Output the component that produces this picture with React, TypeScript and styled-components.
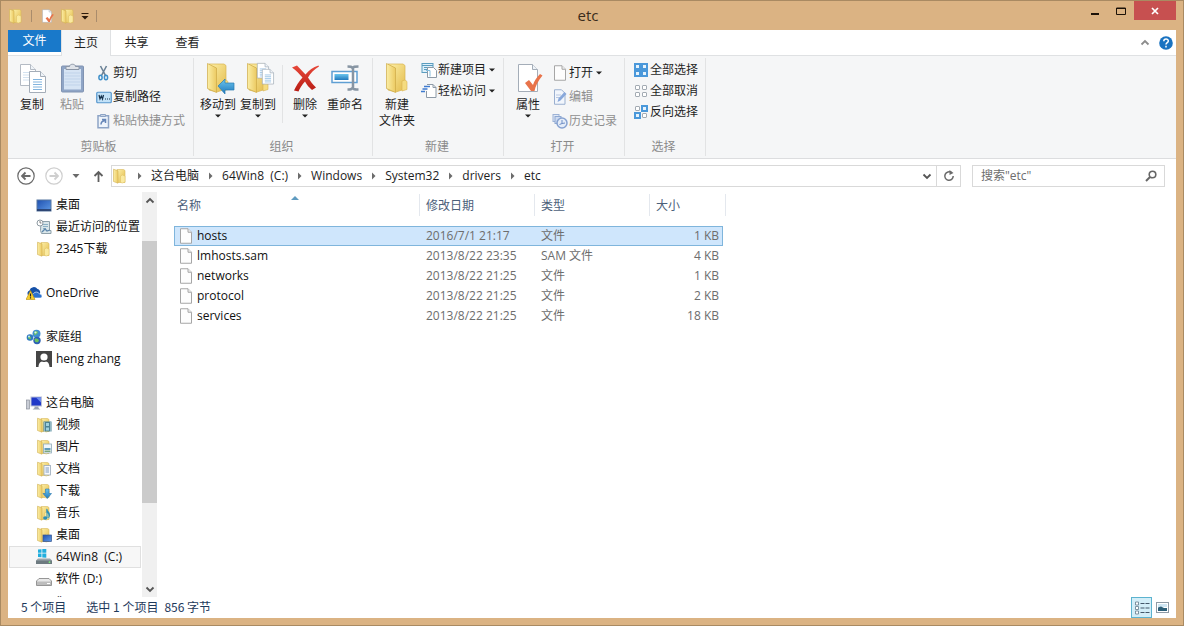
import React from 'react';
import styled, { createGlobalStyle, css } from 'styled-components';

const GlobalStyle = createGlobalStyle`
  * { box-sizing: border-box; }
  body { margin: 0; }
  body, button, input, table {
    font-family: "Open Sans", "Noto Sans CJK SC", sans-serif;
    font-size: 12px;
    line-height: 16px;
    color: #1e1e1e;
  }
  button {
    margin: 0;
    padding: 0;
    border: 0;
    background: none;
    white-space: nowrap;
  }
  svg { display: block; flex: none; }
`;

/* ---------- window frame ---------- */

const Frame = styled.div`
  display: flex;
  flex-direction: column;
  height: 100vh;
  padding: 0 7px 7px;
  border: 1px solid #a98a62;
  background: #dbb383;
`;

const TitleBar = styled.header`
  display: grid;
  grid-template-columns: 1fr auto 1fr;
  flex: none;
  height: 29px;
`;

const QuickAccess = styled.div`
  display: flex;
  align-items: center;
  gap: 5px;
`;

const QuickDivider = styled.span`
  width: 1px;
  height: 12px;
  margin: 0 2px;
  background: #a98c6c;
`;

const Title = styled.h1`
  margin: 0;
  padding-right: 8px;
  font-size: 15px;
  font-weight: 400;
  line-height: 28px;
  color: #3a2c1c;
`;

const WindowButtons = styled.div`
  display: flex;
  justify-content: flex-end;
  align-items: flex-start;
`;

const WindowButton = styled.button<{ $close?: boolean }>`
  display: flex;
  align-items: center;
  justify-content: center;
  width: ${p => (p.$close ? 42 : 26)}px;
  height: 19px;
  background: ${p => (p.$close ? '#c75050' : 'transparent')};
`;

const Client = styled.div`
  display: flex;
  flex-direction: column;
  flex: 1;
  min-height: 0;
  background: #fff;
`;

/* ---------- ribbon ---------- */

const Tabs = styled.nav`
  display: flex;
  flex: none;
  height: 26px;
  border-bottom: 1px solid #dfe1e3;
`;

const Tab = styled.button<{ $kind?: 'file' | 'active' }>`
  width: 51px;
  height: 25px;
  line-height: 24px;
  ${p => p.$kind === 'file' && css`
    width: 53px;
    height: 22px;
    line-height: 22px;
    background: #1979ca;
    color: #fff;
  `}
  ${p => p.$kind === 'active' && css`
    width: 50px;
    height: 26px;
    border: 1px solid #dfe1e3;
    border-width: 0 1px;
    background: #f5f6f7;
  `}
`;

const TabTools = styled.div`
  display: flex;
  align-items: center;
  gap: 9px;
  margin-left: auto;
  padding-right: 3px;
`;

const Ribbon = styled.div`
  display: flex;
  flex: none;
  height: 103px;
  padding: 2px 0;
  border-bottom: 1px solid #dcdddf;
  background: #f5f6f7;
`;

const Group = styled.section<{ $end?: number }>`
  display: flex;
  flex-direction: column;
  justify-content: space-between;
  padding: 0 ${p => p.$end ?? 7}px 0 4px;
  border-right: 1px solid #e2e3e4;
`;

const GroupBody = styled.div`
  display: flex;
`;

const GroupLabel = styled.h2`
  margin: 0;
  font-size: 12px;
  font-weight: 400;
  line-height: 18px;
  text-align: center;
  color: #8a8a8a;
`;

const BigButton = styled.button`
  display: flex;
  flex-direction: column;
  align-items: center;
  width: 40px;
  padding-top: 3px;
  &:disabled { color: #8f8f8f; }
`;

const BigLabel = styled.span`
  padding-top: 2px;
`;

const ButtonDivider = styled.span`
  width: 1px;
  height: 58px;
  margin: 7px 2px 0 4px;
  background: #e2e3e4;
`;

const SmallColumn = styled.div<{ $dense?: boolean }>`
  display: grid;
  grid-auto-rows: ${p => (p.$dense ? 21 : 24)}px;
  align-content: start;
  justify-items: start;
  margin: ${p => (p.$dense ? 1 : 3)}px 0 0 4px;
`;

const SmallButton = styled.button`
  display: flex;
  align-items: center;
  gap: 1px;
  &:disabled { color: #8f8f8f; }
`;

/* ---------- navigation bar ---------- */

const NavBar = styled.div`
  display: flex;
  align-items: center;
  flex: none;
  height: 33px;
  padding: 0 11px 0 9px;
`;

const NavButton = styled.button<{ $gap: number }>`
  margin-right: ${p => p.$gap}px;
`;

const AddressBox = styled.div`
  display: flex;
  align-items: center;
  flex: 1;
  height: 22px;
  margin-right: 11px;
  border: 1px solid #d9d9d9;
`;

const Crumbs = styled.ol`
  display: flex;
  flex: 1;
  margin: 0;
  padding: 0;
  list-style: none;
`;

const Crumb = styled.li`
  display: flex;
  align-items: center;
  white-space: pre;
`;

const CrumbLink = styled.a`
  color: inherit;
  text-decoration: none;
`;

const AddressButton = styled.button<{ $divided?: boolean }>`
  display: flex;
  align-items: center;
  justify-content: center;
  width: ${p => (p.$divided ? 24 : 18)}px;
  height: 20px;
  border-left: ${p => (p.$divided ? '1px solid #d9d9d9' : '0')};
`;

const SearchBox = styled.form`
  display: flex;
  align-items: center;
  flex: none;
  width: 193px;
  height: 22px;
  padding: 0 7px 0 8px;
  border: 1px solid #d9d9d9;
`;

const SearchInput = styled.input`
  flex: 1;
  min-width: 0;
  padding: 0;
  border: 0;
  outline: 0;
  background: none;
  &::placeholder { color: #6d6d6d; opacity: 1; }
`;

/* ---------- main area ---------- */

const Main = styled.div`
  display: flex;
  flex: 1;
  min-height: 0;
`;

const Sidebar = styled.nav`
  flex: none;
  width: 133px;
  padding: 2px 0 0 1px;
  overflow: hidden;
`;

const TreeGroup = styled.ul`
  margin: 0 0 22px;
  padding: 0;
  list-style: none;
`;

const TreeItem = styled.li<{ $level: number; $active?: boolean }>`
  display: flex;
  align-items: center;
  height: 22px;
  padding-left: ${p => (p.$level ? 26 : 16)}px;
  border: 1px solid ${p => (p.$active ? '#e0e0e0' : 'transparent')};
  background: ${p => (p.$active ? '#f7f7f7' : 'transparent')};
`;

const TreeLink = styled.a`
  display: flex;
  align-items: center;
  gap: 4px;
  color: #111;
  text-decoration: none;
  white-space: pre;
`;

const ScrollBar = styled.div`
  display: flex;
  flex-direction: column;
  flex: none;
  width: 15px;
  margin-left: 1px;
  background: #f0f0f0;
`;

const ScrollButton = styled.button`
  display: flex;
  align-items: center;
  justify-content: center;
  flex: none;
  height: 17px;
`;

const ScrollTrack = styled.div`
  display: flex;
  flex-direction: column;
  flex: 1;
`;

const ScrollGap = styled.div<{ $share: number }>`
  flex: ${p => p.$share};
`;

const ScrollThumb = styled.div<{ $share: number }>`
  flex: ${p => p.$share};
  background: #cbcbcb;
`;

const FilePane = styled.main`
  flex: 1;
  padding: 2px 0 0 17px;
`;

const FileTable = styled.table`
  width: 552px;
  table-layout: fixed;
  border-collapse: separate;
  border-spacing: 0;
`;

const HeadCell = styled.th<{ $width: number; $plain?: boolean }>`
  width: ${p => p.$width}px;
  height: 22px;
  padding: 2px 0 0 6px;
  border-right: ${p => (p.$plain ? '0' : '1px solid #e4e8ee')};
  font-weight: 400;
  line-height: 20px;
  text-align: left;
  color: #4c607a;
  &:first-child { padding-left: 3px; }
  &:last-child { padding-left: 0; }
`;

const HeadInner = styled.div`
  display: grid;
  grid-template-columns: 1fr auto 1fr;
  align-items: start;
  padding-right: 7px;
`;

const SpacerCell = styled.td`
  height: 10px;
  padding: 0;
`;

const Row = styled.tr<{ $selected?: boolean }>`
  ${p => p.$selected && css`
    td {
      border-color: #7fb5dc;
      background: #cfe6fc;
    }
  `}
`;

const Cell = styled.td<{ $name?: boolean; $size?: boolean }>`
  height: 20px;
  padding: 0 ${p => (p.$size ? 3 : 0)}px 0 ${p => (p.$name ? 3 : 6)}px;
  border: solid transparent;
  border-width: 1px 0;
  line-height: 18px;
  text-align: ${p => (p.$size ? 'right' : 'left')};
  color: ${p => (p.$name ? '#111' : '#6d6d6d')};
  &:first-child { border-left-width: 1px; }
  &:nth-child(4) { border-right-width: 1px; }
`;

const FileName = styled.span`
  display: flex;
  align-items: center;
  gap: 3px;
`;

const StatusBar = styled.footer`
  display: flex;
  align-items: center;
  flex: none;
  height: 21px;
  padding: 0 3px 0 13px;
  font-family: "Noto Sans CJK SC", sans-serif;
  color: #1e395b;
`;

const StatusText = styled.span<{ $gap: number }>`
  margin-right: ${p => p.$gap}px;
  padding-bottom: 2px;
`;

const ViewButtons = styled.div`
  display: flex;
  margin-left: auto;
`;

const ViewButton = styled.button<{ $on?: boolean }>`
  display: flex;
  align-items: center;
  justify-content: center;
  width: 21px;
  height: 21px;
  border: 1px solid ${p => (p.$on ? '#5cb3cf' : 'transparent')};
  background: ${p => (p.$on ? '#d3eef8' : 'transparent')};
`;

/* ---------- icons ---------- */

const Defs = () => (
  <svg width="0" height="0" aria-hidden="true" style={{ position: 'absolute' }}>
    <defs>
      <linearGradient id="gold" x1="0" y1="0" x2="1" y2="1">
        <stop offset="0" stopColor="#fdf0a8" />
        <stop offset="1" stopColor="#e3bb4c" />
      </linearGradient>
      <linearGradient id="leaf" x1="0" y1="0" x2="1" y2="0">
        <stop offset="0" stopColor="#fbeea6" />
        <stop offset="1" stopColor="#ecca62" />
      </linearGradient>
      <linearGradient id="blue" x1="0" y1="0" x2="0" y2="1">
        <stop offset="0" stopColor="#6cc6ee" />
        <stop offset="1" stopColor="#2179bd" />
      </linearGradient>
      <linearGradient id="red" x1="0" y1="0" x2="0" y2="1">
        <stop offset="0" stopColor="#e8483a" />
        <stop offset="1" stopColor="#b81c14" />
      </linearGradient>
      <linearGradient id="screen" x1="0" y1="0" x2="1" y2="1">
        <stop offset="0" stopColor="#1f50b0" />
        <stop offset="1" stopColor="#5e9ae6" />
      </linearGradient>
    </defs>
  </svg>
);

const SmallFolder = ({ children }: { children?: React.ReactNode }) => (
  <svg width="16" height="16" viewBox="0 0 16 16">
    <path d="M5 1.5h6.5l1.5 1v12H5z" fill="url(#gold)" stroke="#d9b95c" strokeWidth=".6" />
    <path d="M1.500 1.200l4.500 1.600v12.400l-4.500-1.700z" fill="url(#leaf)" stroke="#d2b050" strokeWidth=".6" />
    <path d="M8.500 8l2-1 2.500 1v6l-2.500 1-2-.5z" fill="#faeaa0" stroke="#dcbf62" strokeWidth=".5" />
    {children}
  </svg>
);

const BigFolder = ({ children }: { children?: React.ReactNode }) => (
  <svg width="34" height="34" viewBox="0 0 34 34">
    <path d="M8 3h15l2 1.5V28l-9 3-8-2z" fill="url(#gold)" stroke="#d8b450" strokeWidth=".7" />
    <path d="M6.500 2.500l9 4.500v24.500l-9-4z" fill="url(#leaf)" stroke="#cda946" strokeWidth=".7" />
    <path d="M22 20l3-1 2 1.500v8l-5 1.500z" fill="#f5dc80" stroke="#d8b450" strokeWidth=".6" />
    {children}
  </svg>
);

const Sheet = ({ x, y }: { x: number; y: number }) => (
  <g transform={`translate(${x} ${y})`}>
    <path d="M.5.5h11l5 5v16H.5z" fill="#fff" stroke="#a4adb8" />
    <path d="M11.500.5v5h5" fill="#eef3f8" stroke="#a4adb8" />
    <path d="M4 8.500h9M4 11h9M4 13.500h9M4 16h9M4 18.500h9" stroke="#82b4de" />
  </g>
);

const BlankSheet = ({ x, y }: { x: number; y: number }) => (
  <g transform={`translate(${x} ${y})`}>
    <path d="M.5.5h10l5 5v16H.5z" fill="#fff" stroke="#b4bbc4" />
    <path d="M10.500.5v5h5" fill="#eef3f8" stroke="#b4bbc4" />
    <path d="M3 8.500h6M3 11h6M3 13.500h6M3 16h6" stroke="#d3e2f0" />
  </g>
);

const CopyIcon = () => (
  <svg width="34" height="34" viewBox="0 0 34 34"><BlankSheet x={5} y={3} /><Sheet x={14} y={10} /></svg>
);

const PasteIcon = () => (
  <svg width="34" height="34" viewBox="0 0 34 34">
    <rect x="6.500" y="5" width="22" height="26" rx="1" fill="#8fa5c6" stroke="#8093b2" />
    <rect x="9" y="8" width="17" height="20.500" fill="#d6e4f4" />
    <path d="M9.500 12h16M9.500 15h16M9.500 18h16M9.500 21h16M9.500 24h16" stroke="#c0d3ea" />
    <path d="M11 8.500v-3h3.500c0-3 6-3 6 0H24v3z" fill="#dfe3e9" stroke="#8b96a6" />
  </svg>
);

const MoveIcon = () => (
  <BigFolder><path d="M17 25l7-7v4h9v7h-9v4z" fill="url(#blue)" stroke="#2a7db3" strokeWidth=".7" /></BigFolder>
);

const CopyToIcon = () => (
  <BigFolder>
    <g transform="translate(16 2) scale(.7)"><Sheet x={0} y={0} /></g>
    <g transform="translate(21 8) scale(.7)"><Sheet x={0} y={0} /></g>
  </BigFolder>
);

const DeleteIcon = () => (
  <svg width="34" height="34" viewBox="0 0 34 34">
    <path d="M4 6.500l5-2 8.500 9C21 9 25 6 30.500 4.500l.5 1C26.500 8 22.500 12 20 16.500c2.500 4 5 7 8 10l-4 2.500c-3-2.500-5-5-7-8.500-3 3.500-5.500 7-6.500 10l-4.500-1c2-4.500 5-9 8.500-13C11.500 13 8 9.500 4 6.500z" fill="url(#red)" />
  </svg>
);

const RenameIcon = () => (
  <svg width="34" height="34" viewBox="0 0 34 34">
    <rect x="4" y="10.500" width="25" height="11" fill="#fff" stroke="#5f9fd3" strokeWidth="1.500" />
    <rect x="6.500" y="13" width="14" height="6" fill="url(#blue)" />
    <path d="M19.500 5.500c3 0 4.500 0 5 2 .5-2 2-2 6-2M25 7v20M19.500 28.500c3 0 4.500 0 5-2 .5 2 2 2 6 2" fill="none" stroke="#8795a3" strokeWidth="2.500" />
  </svg>
);

const PropertiesIcon = ({ size = 34 }: { size?: number }) => (
  <svg width={size} height={size} viewBox="0 0 34 34">
    <path d="M7.500 3.500h14l5 5v22h-19z" fill="#fff" stroke="#a4adb8" />
    <path d="M21.500 3.500v5h5" fill="#eef3f8" stroke="#a4adb8" />
    <path d="M14 22l4-3 4 5c1-3.500 3.500-7.500 7-11l2.500 1.500C27 20 24.500 25 23.500 30h-3.500z" fill="#e8734a" />
  </svg>
);

const ScissorsIcon = () => (
  <svg width="16" height="16" viewBox="0 0 16 16" fill="none">
    <path d="M4.500 1l5 9.500M10.500 1l-5 9.500" stroke="#6b8296" strokeWidth="1.600" />
    <ellipse cx="4.500" cy="12.500" rx="1.600" ry="2.300" stroke="#3e8fc9" strokeWidth="1.500" />
    <ellipse cx="10" cy="12.500" rx="1.600" ry="2.300" stroke="#3e8fc9" strokeWidth="1.500" />
  </svg>
);

const PathIcon = () => (
  <svg width="16" height="16" viewBox="0 0 16 16" fill="none">
    <rect x=".75" y="3.250" width="14.500" height="10.500" rx="1" fill="#c2e2f8" stroke="#5596cd" strokeWidth="1.200" />
    <path d="M3 6l1 4 1.300-3 1.200 3L7.500 6" stroke="#16324d" strokeWidth="1.200" />
    <path d="M9 10h1M11 10h1M13 10h1" stroke="#16324d" />
  </svg>
);

const PasteShortcutIcon = () => (
  <svg width="16" height="16" viewBox="0 0 16 16" fill="none">
    <rect x="2" y="2.750" width="10.500" height="12" fill="#eef4fb" stroke="#8da4c6" strokeWidth="1.500" />
    <path d="M4.500 3.500v-2h5v2z" fill="#c9d4e4" stroke="#8da4c6" />
    <path d="M5 11.500c0-2 1-3.500 4-4M6 6.500h3.500v3.500" stroke="#6686b8" strokeWidth="1.500" />
  </svg>
);

const NewItemIcon = () => (
  <svg width="16" height="16" viewBox="0 0 16 16" fill="none">
    <rect x="1" y="1.500" width="11" height="9" fill="#dff0fa" stroke="#5b9dbf" />
    <path d="M1 3.500h11M3 5.500h4M3 7.500h3" stroke="#5b9dbf" />
    <path d="M6.500 5.500h6l3 3v7h-9z" fill="#fff" stroke="#8d9aa7" />
    <path d="M5 8.500h4v6" stroke="#85bedd" />
  </svg>
);

const EasyAccessIcon = () => (
  <svg width="16" height="16" viewBox="0 0 16 16" fill="none">
    <path d="M6 1.500h6l3 3v10H5.500V8" fill="#fff" stroke="#8d9aa7" />
    <path d="M12 1.500v3h3" stroke="#8d9aa7" />
    <path d="M3 3.500h6M1.500 6h5M0 8.500h4" stroke="#3f7bd0" strokeWidth="1.300" />
  </svg>
);

const PageIcon = () => (
  <svg width="16" height="16" viewBox="0 0 16 16">
    <path d="M2.500.75h7.500l3.500 3.500v11h-11z" fill="#fdfdfd" stroke="#a6a6a6" />
    <path d="M10 .75v3.500h3.500" fill="#f0f0f0" stroke="#a6a6a6" />
  </svg>
);

const EditIcon = () => (
  <svg width="16" height="16" viewBox="0 0 16 16">
    <path d="M2.500.75h7l3.500 3.500v11H2.500z" fill="#f2f6fc" stroke="#9bb0d0" />
    <path d="M4 6h5M4 8.500h4" stroke="#b8c8e2" />
    <path d="M5.500 13l1-3.500 6-6.500 2 2-6 6.500z" fill="#88a8db" />
  </svg>
);

const HistoryIcon = () => (
  <svg width="16" height="16" viewBox="0 0 16 16" fill="none">
    <rect x="1" y="1.500" width="6" height="7" fill="#e1e9f6" stroke="#9cb2d6" />
    <rect x="3" y="3.500" width="6" height="7" fill="#cddbf1" stroke="#8ea8d2" />
    <circle cx="10" cy="10" r="5" fill="#e4ecf8" stroke="#86a2d1" strokeWidth="1.500" />
    <path d="M10 7v3.500l3-.5M7.500 11.500l2.500-1" stroke="#6f8fc6" />
  </svg>
);

const SelectIcon = ({ on }: { on: [boolean, boolean, boolean, boolean] }) => {
  const spots = [[1, 1], [8, 1], [1, 8], [8, 8]];
  return (
    <svg width="16" height="16" viewBox="0 0 16 16">
      {spots.map(([x, y], i) =>
        on[i] ? (
          <g key={i}>
            <rect x={x} y={y} width="7" height="7" fill="#4a98da" />
            <rect x={x + 2} y={y + 2} width="3" height="3" fill="#e6f3fc" />
          </g>
        ) : (
          <rect key={i} x={x + 1.5} y={y + 1.5} width="4" height="4" rx=".5" fill="#fff" stroke="#a3abb3" />
        ),
      )}
    </svg>
  );
};

const Caret = () => (
  <svg width="10" height="6" viewBox="0 0 10 6"><path d="M2 1.500h6L5 4.500z" fill="#222" /></svg>
);

const CrumbArrow = () => (
  <svg width="23" height="10" viewBox="0 0 23 10"><path d="M10 1.500v7l3.500-3.500z" fill="#6b6b6b" /></svg>
);

const Chevron = ({ up, color = '#555' }: { up?: boolean; color?: string }) => (
  <svg width="10" height="8" viewBox="0 0 10 8">
    <path d={up ? 'M1.500 5.500L5 2l3.500 3.500' : 'M1.500 2.500L5 6l3.500-3.500'} fill="none" stroke={color} strokeWidth="1.800" />
  </svg>
);

const CircleArrow = ({ forward }: { forward?: boolean }) => (
  <svg width="18" height="18" viewBox="0 0 18 18" fill="none" stroke={forward ? '#cfcfcf' : '#6a6a6a'}>
    <circle cx="9" cy="9" r="8.200" strokeWidth="1.200" />
    <path d={forward ? 'M4.500 9h8.500M9.500 5.500L13 9l-3.500 3.500' : 'M13.500 9H5M8.500 5.500L5 9l3.500 3.500'} strokeWidth="1.800" />
  </svg>
);

const DesktopIcon = () => (
  <svg width="16" height="16" viewBox="0 0 16 16">
    <rect x="1" y="3" width="14" height="11" fill="url(#screen)" stroke="#57779f" />
    <path d="M1 13h14" stroke="#23355c" strokeWidth="1.500" />
  </svg>
);

const RecentIcon = () => (
  <svg width="16" height="16" viewBox="0 0 16 16" fill="none">
    <path d="M5 2.500h8.500v9H15v3H5.500l-1-3z" fill="#d9e6ea" stroke="#8fa1aa" />
    <path d="M7 5.500h5M7 7.500h5M7 9.500h3" stroke="#8db1c4" />
    <path d="M6 13l3-3 2 2 3-1" stroke="#5e87ac" strokeWidth="1.300" />
    <circle cx="4" cy="4" r="3" fill="#fff" stroke="#8e9aa2" />
    <path d="M4 2v2h1.500" stroke="#666" strokeWidth=".8" />
  </svg>
);

const OneDriveIcon = () => (
  <svg width="16" height="16" viewBox="0 0 16 16">
    <path d="M3 11a3 3 0 0 1 .5-5.500A4.500 4.500 0 0 1 11.500 4 3.500 3.500 0 0 1 14 8.500L15.500 12H4z" fill="#1550a8" />
    <path d="M7 13a2.500 2.500 0 0 1 .5-4.500 3.500 3.500 0 0 1 6 .5 2.200 2.200 0 0 1 1.500 4z" fill="#2b72cf" stroke="#fff" strokeWidth=".6" />
    <path d="M4.500 5.500L9 14.500H0z" fill="#f8cf2c" stroke="#b88c10" strokeWidth=".6" />
    <path d="M4.500 8.500v3M4.500 12.300v1.200" stroke="#222" strokeWidth="1.200" />
  </svg>
);

const HomeGroupIcon = () => (
  <svg width="16" height="16" viewBox="0 0 16 16">
    <circle cx="10.500" cy="4.800" r="4" fill="#3f8fd0" />
    <circle cx="4" cy="8.500" r="3.300" fill="#2f79c0" />
    <circle cx="11" cy="11.500" r="3.700" fill="#2c62b4" />
    <path d="M8 3c2-1.500 3-1 4 .5-1 2-3 2-3.500 3zM2 7.500c2-.5 3 .5 3 2-1 1.500-2 .5-3-.5zM8.500 10c2-1 4 0 4.500 1.500-1 2.500-3 2-4 1z" fill="#6cc35c" />
    <circle cx="9.500" cy="3.500" r="1.100" fill="#d8effb" /><circle cx="3" cy="7.500" r="1" fill="#c8e6f8" />
  </svg>
);

const UserIcon = () => (
  <svg width="16" height="16" viewBox="0 0 16 16">
    <rect width="16" height="16" fill="#454545" />
    <circle cx="8" cy="6" r="3.600" fill="#fff" />
    <path d="M2.500 16c.3-4 2-5.300 3.500-5.500 1 .8 3 .8 4 0 1.500.2 3.200 1.500 3.500 5.500z" fill="#fff" />
  </svg>
);

const ComputerIcon = () => (
  <svg width="16" height="16" viewBox="0 0 16 16">
    <rect x=".5" y="5" width="3" height="9" fill="#c9cdd6" stroke="#8b909c" strokeWidth=".7" />
    <rect x="5" y="2" width="10.500" height="9" fill="#2038c8" stroke="#b9c0d6" />
    <path d="M10 2.500h5v5z" fill="#6d8cf0" />
    <path d="M8.500 11.500h4v1.500l2 1.500h-8l2-1.500z" fill="#9ba3b4" />
  </svg>
);

const VideoFolder = () => (
  <SmallFolder>
    <rect x="7.500" y="4.500" width="8" height="10" fill="#4d8396" />
    <path d="M8.500 5.500v9M14.500 5.500v9" stroke="#d8edf2" strokeDasharray="1 1" />
    <rect x="10" y="6" width="3" height="3" fill="#9fd0dc" /><rect x="10" y="10.500" width="3" height="3" fill="#9fd0dc" />
  </SmallFolder>
);

const PictureFolder = () => (
  <SmallFolder>
    <rect x="7.500" y="5" width="8" height="9" fill="#eef6fa" stroke="#8fabb8" strokeWidth=".8" />
    <path d="M8.500 9h6v2h-6z" fill="#5f9cba" /><path d="M8.500 11.500h6V13h-6z" fill="#7aa77e" />
  </SmallFolder>
);

const DocumentFolder = () => (
  <SmallFolder>
    <rect x="8" y="4.500" width="6.500" height="9.500" fill="#f6f8fb" stroke="#9aa8ba" strokeWidth=".8" />
    <path d="M9.500 7h3.500M9.500 9h3.500M9.500 11h3.500" stroke="#7e9cc0" />
  </SmallFolder>
);

const DownloadFolder = () => (
  <SmallFolder><path d="M9.500 6h3.500v4.500h2.500l-4.200 5-4.300-5h2.500z" fill="url(#blue)" stroke="#2775ac" strokeWidth=".6" /></SmallFolder>
);

const MusicFolder = () => (
  <SmallFolder>
    <path d="M10.500 3c0 2.500 4 3.500 3.500 7.500-.2 1.500-1 2.500-2 3 1-3 .5-5-1.500-6z" fill="#2d8fb8" />
    <ellipse cx="9.300" cy="13" rx="2.200" ry="1.700" fill="#2d8fb8" /><path d="M11 4v9" stroke="#2d8fb8" />
  </SmallFolder>
);

const DesktopFolder = () => (
  <SmallFolder><rect x="7" y="8" width="8.500" height="6.500" fill="url(#screen)" stroke="#37558c" strokeWidth=".7" /></SmallFolder>
);

const SystemDriveIcon = () => (
  <svg width="16" height="16" viewBox="0 0 16 16">
    <path d="M2 0.500l3.500-.3v3.600H2zM6.300 0l4-.4v4.200h-4zM2 4.600h3.500v3.700L2 8zM6.300 4.600h4v4.200l-4-.4z" fill="#20aede" />
    <path d="M2 9.500h12l2 2v3.500H0v-3.500z" fill="#9aa5ab" /><path d="M0 11.500h16V15H0z" fill="#6d7a80" />
    <circle cx="13.500" cy="13.200" r=".9" fill="#7df07a" />
  </svg>
);

const DriveIcon = () => (
  <svg width="16" height="16" viewBox="0 0 16 16">
    <path d="M3 7.500h10l2.500 2.500v4.500H.5V10z" fill="#e9e9e9" stroke="#8b8b8b" strokeWidth=".9" />
    <path d="M1 10.500h14V14H1z" fill="#bdbdbd" /><path d="M11 12.500h3" stroke="#fff" />
  </svg>
);

/* ---------- data ---------- */

const places = [
  [
    { label: '桌面', icon: <DesktopIcon />, level: 1 },
    { label: '最近访问的位置', icon: <RecentIcon />, level: 1 },
    { label: '2345下载', icon: <SmallFolder />, level: 1 },
  ],
  [{ label: 'OneDrive', icon: <OneDriveIcon />, level: 0 }],
  [
    { label: '家庭组', icon: <HomeGroupIcon />, level: 0 },
    { label: 'heng zhang', icon: <UserIcon />, level: 1 },
  ],
  [
    { label: '这台电脑', icon: <ComputerIcon />, level: 0 },
    { label: '视频', icon: <VideoFolder />, level: 1 },
    { label: '图片', icon: <PictureFolder />, level: 1 },
    { label: '文档', icon: <DocumentFolder />, level: 1 },
    { label: '下载', icon: <DownloadFolder />, level: 1 },
    { label: '音乐', icon: <MusicFolder />, level: 1 },
    { label: '桌面', icon: <DesktopFolder />, level: 1 },
    { label: '64Win8  (C:)', icon: <SystemDriveIcon />, level: 1, active: true },
    { label: '软件 (D:)', icon: <DriveIcon />, level: 1 },
    { label: '¨', icon: <DriveIcon />, level: 1 },
  ],
] as { label: string; icon: React.ReactNode; level: number; active?: boolean }[][];

const files = [
  ['hosts', '2016/7/1 21:17', '文件', '1 KB'],
  ['lmhosts.sam', '2013/8/22 23:35', 'SAM 文件', '4 KB'],
  ['networks', '2013/8/22 21:25', '文件', '1 KB'],
  ['protocol', '2013/8/22 21:25', '文件', '2 KB'],
  ['services', '2013/8/22 21:25', '文件', '18 KB'],
];

const crumbs = ['这台电脑', '64Win8  (C:)', 'Windows', 'System32', 'drivers', 'etc'];

/* ---------- composed controls ---------- */

const Big = ({ icon, label, menu, disabled }: { icon: React.ReactNode; label: React.ReactNode; menu?: boolean; disabled?: boolean }) => (
  <BigButton type="button" disabled={disabled}>
    {icon}
    <BigLabel>{label}</BigLabel>
    {menu && <Caret />}
  </BigButton>
);

const Small = ({ icon, label, menu, disabled }: { icon: React.ReactNode; label: string; menu?: boolean; disabled?: boolean }) => (
  <SmallButton type="button" disabled={disabled}>
    {icon}
    <span>{label}</span>
    {menu && <Caret />}
  </SmallButton>
);

export default function App() {
  return (
    <Frame>
      <GlobalStyle />
      <Defs />
      <TitleBar>
        <QuickAccess>
          <SmallFolder />
          <QuickDivider />
          <button type="button" aria-label="属性"><PropertiesIcon size={16} /></button>
          <button type="button" aria-label="新建文件夹"><SmallFolder /></button>
          <button type="button" aria-label="自定义快速访问工具栏">
            <svg width="8" height="8" viewBox="0 0 8 8"><path d="M.5 1.500h7" stroke="#2b1a0c" /><path d="M.5 4h7L4 7.500z" fill="#2b1a0c" /></svg>
          </button>
          <QuickDivider />
        </QuickAccess>
        <Title>etc</Title>
        <WindowButtons>
          <WindowButton type="button" aria-label="最小化">
            <svg width="10" height="10" viewBox="0 0 10 10"><path d="M1 8h8" stroke="#1c1208" strokeWidth="2" /></svg>
          </WindowButton>
          <WindowButton type="button" aria-label="最大化">
            <svg width="10" height="8" viewBox="0 0 10 8"><path d="M.5 1h9v6.500h-9zM.5 1.500h9" fill="none" stroke="#1c1208" /></svg>
          </WindowButton>
          <WindowButton type="button" $close aria-label="关闭">
            <svg width="8" height="8" viewBox="0 0 8 8"><path d="M1 1l6 6M7 1L1 7" stroke="#fff" strokeWidth="1.700" /></svg>
          </WindowButton>
        </WindowButtons>
      </TitleBar>

      <Client>
        <Tabs>
          <Tab type="button" $kind="file">文件</Tab>
          <Tab type="button" $kind="active">主页</Tab>
          <Tab type="button">共享</Tab>
          <Tab type="button">查看</Tab>
          <TabTools>
            <button type="button" aria-label="最小化功能区"><Chevron up color="#8c8c8c" /></button>
            <button type="button" aria-label="帮助">
              <svg width="14" height="14" viewBox="0 0 14 14" fill="none">
                <circle cx="7" cy="7" r="6.800" fill="#1a73c1" />
                <path d="M4.800 5.200c0-3 4.600-2.800 4.500-.2 0 1.600-2.300 1.700-2.300 3.500M7 9.800v1.600" stroke="#fff" strokeWidth="1.500" />
              </svg>
            </button>
          </TabTools>
        </Tabs>

        <Ribbon>
          <Group $end={8}>
            <GroupBody>
              <Big icon={<CopyIcon />} label="复制" />
              <Big icon={<PasteIcon />} label="粘贴" disabled />
              <SmallColumn>
                <Small icon={<ScissorsIcon />} label="剪切" />
                <Small icon={<PathIcon />} label="复制路径" />
                <Small icon={<PasteShortcutIcon />} label="粘贴快捷方式" disabled />
              </SmallColumn>
            </GroupBody>
            <GroupLabel>剪贴板</GroupLabel>
          </Group>
          <Group>
            <GroupBody>
              <Big icon={<MoveIcon />} label="移动到" menu />
              <Big icon={<CopyToIcon />} label="复制到" menu />
              <ButtonDivider />
              <Big icon={<DeleteIcon />} label="删除" menu />
              <Big icon={<RenameIcon />} label="重命名" />
            </GroupBody>
            <GroupLabel>组织</GroupLabel>
          </Group>
          <Group $end={6}>
            <GroupBody>
              <Big icon={<BigFolder />} label={<>新建<br />文件夹</>} />
              <SmallColumn $dense>
                <Small icon={<NewItemIcon />} label="新建项目" menu />
                <Small icon={<EasyAccessIcon />} label="轻松访问" menu />
              </SmallColumn>
            </GroupBody>
            <GroupLabel>新建</GroupLabel>
          </Group>
          <Group>
            <GroupBody>
              <Big icon={<PropertiesIcon />} label="属性" menu />
              <SmallColumn>
                <Small icon={<PageIcon />} label="打开" menu />
                <Small icon={<EditIcon />} label="编辑" disabled />
                <Small icon={<HistoryIcon />} label="历史记录" disabled />
              </SmallColumn>
            </GroupBody>
            <GroupLabel>打开</GroupLabel>
          </Group>
          <Group>
            <GroupBody>
              <SmallColumn $dense>
                <Small icon={<SelectIcon on={[true, true, true, true]} />} label="全部选择" />
                <Small icon={<SelectIcon on={[false, false, false, false]} />} label="全部取消" />
                <Small icon={<SelectIcon on={[false, true, true, false]} />} label="反向选择" />
              </SmallColumn>
            </GroupBody>
            <GroupLabel>选择</GroupLabel>
          </Group>
        </Ribbon>

        <NavBar>
          <NavButton type="button" $gap={10} aria-label="后退"><CircleArrow /></NavButton>
          <NavButton type="button" $gap={8} aria-label="前进"><CircleArrow forward /></NavButton>
          <NavButton type="button" $gap={12} aria-label="最近位置">
            <svg width="10" height="6" viewBox="0 0 10 6"><path d="M1.500 1h7L5 5z" fill="#6a6a6a" /></svg>
          </NavButton>
          <NavButton type="button" $gap={7} aria-label="上移">
            <svg width="11" height="12" viewBox="0 0 11 12" fill="none" stroke="#5f5f5f" strokeWidth="1.800"><path d="M5.500 12V2M1.500 6l4-4 4 4" /></svg>
          </NavButton>
          <AddressBox>
            <SmallFolder />
            <Crumbs>
              {crumbs.map(name => (
                <Crumb key={name}><CrumbArrow /><CrumbLink href="#">{name}</CrumbLink></Crumb>
              ))}
            </Crumbs>
            <AddressButton type="button" aria-label="以前的位置"><Chevron /></AddressButton>
            <AddressButton type="button" $divided aria-label="刷新">
              <svg width="12" height="12" viewBox="0 0 12 12" fill="none">
                <path d="M8.500 2.700A4.200 4.200 0 1 0 10.200 6" stroke="#6a6a6a" strokeWidth="1.500" />
                <path d="M6.500 0v5l4-2z" fill="#6a6a6a" />
              </svg>
            </AddressButton>
          </AddressBox>
          <SearchBox>
            <SearchInput type="search" placeholder={'搜索"etc"'} aria-label="搜索 etc" />
            <svg width="12" height="12" viewBox="0 0 12 12" fill="none" stroke="#666">
              <circle cx="7.500" cy="4.500" r="3.300" strokeWidth="1.600" /><path d="M5 7L1 11" strokeWidth="2" />
            </svg>
          </SearchBox>
        </NavBar>

        <Main>
          <Sidebar>
            {places.map((group, i) => (
              <TreeGroup key={i}>
                {group.map(item => (
                  <TreeItem key={item.label} $level={item.level} $active={item.active}>
                    <TreeLink href="#">{item.icon}{item.label}</TreeLink>
                  </TreeItem>
                ))}
              </TreeGroup>
            ))}
          </Sidebar>
          <ScrollBar>
            <ScrollButton type="button" aria-label="向上滚动"><Chevron up /></ScrollButton>
            <ScrollTrack>
              <ScrollGap $share={32} />
              <ScrollThumb $share={262} />
              <ScrollGap $share={77} />
            </ScrollTrack>
            <ScrollButton type="button" aria-label="向下滚动"><Chevron /></ScrollButton>
          </ScrollBar>
          <FilePane>
            <FileTable>
              <thead>
                <tr>
                  <HeadCell $width={246}>
                    <HeadInner>
                      <span>名称</span>
                      <svg width="8" height="4" viewBox="0 0 8 4"><path d="M0 4l4-4 4 4z" fill="#5f9bc0" /></svg>
                    </HeadInner>
                  </HeadCell>
                  <HeadCell $width={115}>修改日期</HeadCell>
                  <HeadCell $width={115}>类型</HeadCell>
                  <HeadCell $width={73} $plain>大小</HeadCell>
                  <HeadCell as="td" $width={3} />
                </tr>
              </thead>
              <tbody>
                <tr><SpacerCell colSpan={5} /></tr>
                {files.map(([name, date, type, size], i) => (
                  <Row key={name} $selected={i === 0}>
                    <Cell $name><FileName><PageIcon />{name}</FileName></Cell>
                    <Cell>{date}</Cell>
                    <Cell>{type}</Cell>
                    <Cell $size>{size}</Cell>
                  </Row>
                ))}
              </tbody>
            </FileTable>
          </FilePane>
        </Main>

        <StatusBar>
          <StatusText $gap={20}>5 个项目</StatusText>
          <StatusText $gap={6}>选中 1 个项目</StatusText>
          <StatusText $gap={0}>856 字节</StatusText>
          <ViewButtons>
            <ViewButton type="button" $on aria-label="详细信息">
              <svg width="16" height="14" viewBox="0 0 16 14">
                <path d="M1.500 1h3v3h-3zM1.500 5.500h3v3h-3zM1.500 10h3v3h-3z" fill="#fff" stroke="#6f8796" strokeWidth=".9" />
                <path d="M6.500 2.500h4M11.500 2.500h4M6.500 7h4M11.500 7h4M6.500 11.500h4M11.500 11.500h4" stroke="#44586a" strokeWidth="1.200" />
              </svg>
            </ViewButton>
            <ViewButton type="button" aria-label="大图标">
              <svg width="13" height="11" viewBox="0 0 13 11">
                <rect x=".5" y=".5" width="12" height="10" fill="#fff" stroke="#8f9ba6" />
                <path d="M2 2h9v3H2z" fill="#cfe6f3" /><path d="M2 5.500l3-1 3 1.500h3V9H2z" fill="#2c5f78" />
              </svg>
            </ViewButton>
          </ViewButtons>
        </StatusBar>
      </Client>
    </Frame>
  );
}
